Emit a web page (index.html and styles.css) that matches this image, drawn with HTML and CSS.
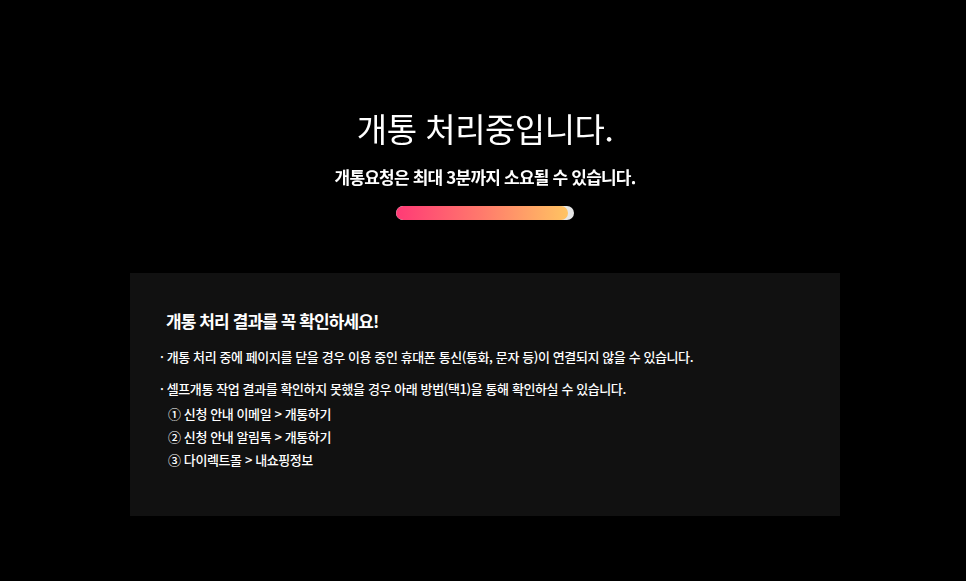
FILE: index.html
```html
<!DOCTYPE html>
<html lang="ko">
<head>
<meta charset="utf-8">
<title>개통 처리중</title>
<link rel="stylesheet" href="styles.css">
</head>
<body>
<div class="page">
  <div class="steps">
    <div class="step step-1">
      <span class="step-num">STEP 01</span>
      <span class="step-name">요금제 선택하기</span>
    </div>
    <div class="step step-2">
      <span class="step-num">STEP 02</span>
      <span class="step-name">본인인증</span>
    </div>
    <div class="step step-3">
      <span class="step-num">STEP 03</span>
      <span class="step-name">가입정보입력</span>
    </div>
    <div class="step step-4">
      <span class="step-num">STEP 04</span>
      <span class="step-name">개통결과확인</span>
    </div>
  </div>
  <ul class="bg-list">
    <li>가입요금제/부가서비스 확인 후 고객님께서 선택하신 내용이 맞는지 확인해 주세요.</li>
    <li>이전 통신사 사용 요금 확인 후 미납 요금이 있는지 확인해 주세요.</li>
    <li>다이렉트몰 가입 동의 후 셀프개통 진행 시 개통 완료까지 잠시 기다려 주세요.</li>
  </ul>
  <p class="bg-foot">셀프개통 관련 문의는 고객센터로 연락 바랍니다</p>
</div>

<div class="overlay">
  <h1 class="title">개통 처리중입니다.</h1>
  <p class="subtitle">개통요청은 최대 3분까지 소요될 수 있습니다.</p>
  <div class="progress"><div class="progress-fill" style="width: 172px"></div></div>

  <section class="notice">
    <h2 class="notice-title">개통 처리 결과를 꼭 확인하세요!</h2>
    <ul class="notice-list">
      <li>· 개통 처리 중에 페이지를 닫을 경우 이용 중인 휴대폰 통신(통화, 문자 등)이 연결되지 않을 수 있습니다.</li>
      <li>· 셀프개통 작업 결과를 확인하지 못했을 경우 아래 방법(택1)을 통해 확인하실 수 있습니다.
        <ol class="methods">
          <li>① 신청 안내 이메일 &gt; 개통하기</li>
          <li>② 신청 안내 알림톡 &gt; 개통하기</li>
          <li>③ 다이렉트몰 &gt; 내쇼핑정보</li>
        </ol>
      </li>
    </ul>
  </section>
</div>
</body>
</html>
```

FILE: styles.css
```css
* { box-sizing: border-box; }

html, body {
  margin: 0;
  padding: 0;
  background: #000;
  font-family: "Noto Sans CJK KR", "Noto Sans", sans-serif;
}

.page {
  color: #0c0c0c;
  min-height: 581px;
}

.steps {
  display: flex;
  padding: 20px 0 0 130px;
  height: 100px;
}

.step {
  display: flex;
  flex-direction: column;
  justify-content: center;
  font-size: 11px;
  line-height: 20px;
  white-space: nowrap;
}

.step-1 {
  width: 170px;
  padding-left: 53px;
  border: 1px solid #060606;
  border-right: 0;
  border-radius: 40px 0 0 40px;
}

.step-2 { width: 160px; padding-left: 52px; }
.step-3 { width: 185px; padding-left: 48px; }

.step-4 {
  flex: 1;
  padding-left: 51px;
  border-left: 1px solid #060606;
  font-weight: 700;
}

.step-name { font-size: 13px; }

.bg-list {
  list-style: none;
  margin: 40px 0 0;
  padding: 0;
  font-size: 15px;
  line-height: 41px;
}

.bg-list li { margin: 0; }

.bg-foot {
  margin: 290px 0 0 28px;
  font-size: 14px;
  font-weight: 700;
}

.overlay {
  position: fixed;
  inset: 0;
  background: rgba(0, 0, 0, 0.96);
  display: flex;
  flex-direction: column;
  align-items: center;
  padding: 108px 0 0 4px;
  color: #fff;
}

.title {
  margin: 0;
  font-size: 33px;
  line-height: 40px;
  font-weight: 400;
  letter-spacing: -0.5px;
}

.subtitle {
  margin: 17px 0 0;
  font-size: 17px;
  line-height: 24px;
  font-weight: 700;
  letter-spacing: -0.8px;
}

.progress {
  margin-top: 17px;
  width: 178px;
  height: 14px;
  border-radius: 7px;
  background: #e6e6e6;
  overflow: hidden;
}

.progress-fill {
  height: 100%;
  border-radius: 7px;
  background: linear-gradient(90deg, #ff3a76 0%, #ff7a6c 50%, #ffc462 100%);
}

.notice {
  margin-top: 53px;
  width: 710px;
  height: 243px;
  background: #111;
  padding: 36px 30px 0;
}

.notice-title {
  margin: 0 0 0 6px;
  font-size: 17px;
  line-height: 24px;
  font-weight: 700;
  letter-spacing: -0.9px;
}

.notice-list {
  list-style: none;
  margin: 13px 0 0;
  padding: 0;
  font-size: 13px;
  line-height: 22px;
  font-weight: 500;
  letter-spacing: -0.4px;
}

.notice-list > li + li { margin-top: 10px; }

.methods {
  list-style: none;
  margin: 2px 0 0;
  padding: 0 0 0 8px;
  line-height: 23px;
}
```
